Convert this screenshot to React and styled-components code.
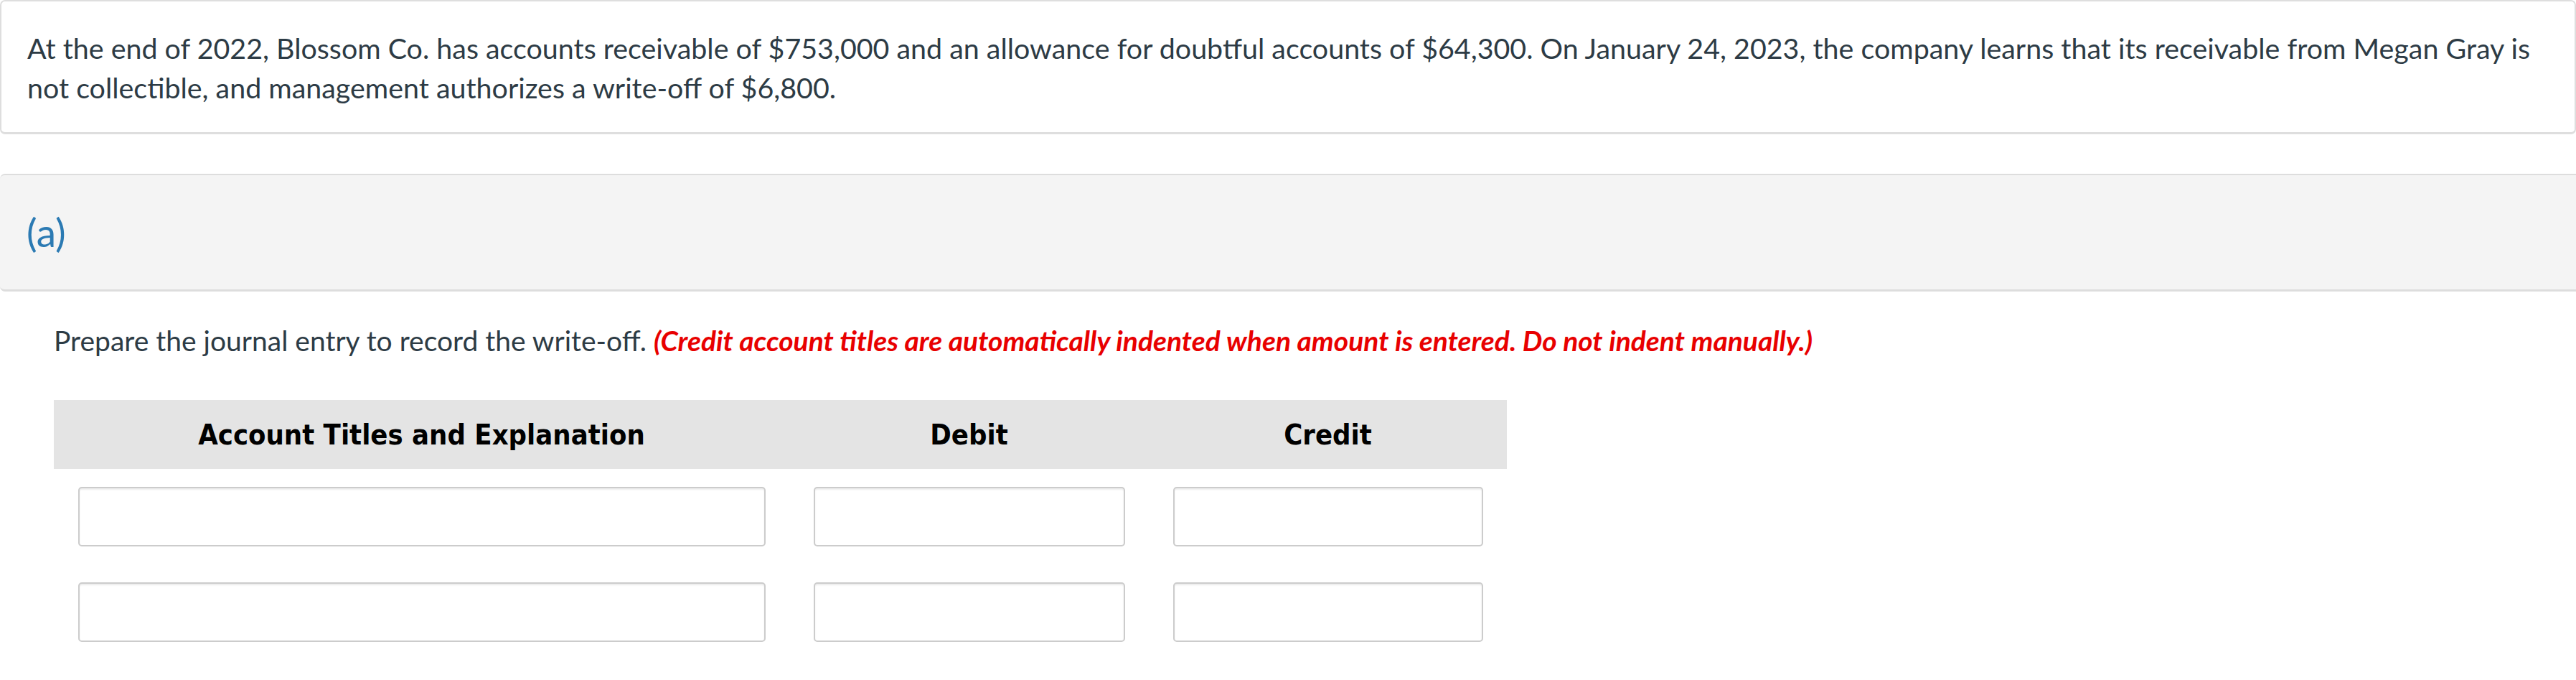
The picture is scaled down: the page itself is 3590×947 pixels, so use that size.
import React from 'react';
import styled, { createGlobalStyle } from 'styled-components';

const Global = createGlobalStyle`
  html, body {
    margin: 0;
    padding: 0;
    background: #fff;
  }
  body {
    font-family: Lato, "Open Sans", sans-serif;
    color: #2d3b45;
  }
`;

const Page = styled.div`
  width: 3590px;
`;

const QuestionCard = styled.div`
  border: 2px solid #dedede;
  border-bottom-width: 3px;
  border-radius: 7px;
  padding: 37px 36px 35px 36px;
  font-size: 39.4px;
  line-height: 55px;
`;

const PartHeader = styled.div`
  margin-top: 55px;
  height: 159px;
  display: flex;
  align-items: center;
  background: #f4f4f4;
  border-top: 2px solid #dddddd;
  border-bottom: 3px solid #dddddd;
  border-radius: 7px 0 0 7px;
  padding-left: 37px;
  color: #2b7ab3;
  font-size: 55px;
  line-height: 1;
`;

const PartBody = styled.div`
  padding: 41px 0 0 75px;
`;

const Instruction = styled.p`
  margin: 0;
  font-size: 39px;
  line-height: 55px;
`;

const Note = styled.span`
  color: #e80000;
  font-style: italic;
  font-weight: 700;
`;

const Journal = styled.div`
  margin-top: 55px;
  width: 2025px;
  display: grid;
  grid-template-columns: 1025px 501px 499px;
`;

const HeadCell = styled.div`
  height: 96px;
  background: #e4e4e4;
  display: flex;
  align-items: center;
  justify-content: center;
  font-family: "DejaVu Sans Condensed", "DejaVu Sans", Verdana, sans-serif;
  font-stretch: condensed;
  font-weight: 700;
  font-size: 39.6px;
  color: #000;
`;

const Cell = styled.div`
  padding: ${({ $first }) => ($first ? '25px' : '50px')} 33px 0 34px;
`;

const Field = styled.input`
  display: block;
  box-sizing: border-box;
  width: 100%;
  height: 83px;
  border: 2px solid #cccccc;
  border-radius: 5px;
  box-shadow: inset 0 2px 2px rgba(0, 0, 0, 0.08);
  background: #fff;
  font-family: Lato, sans-serif;
  font-size: 36px;
  padding: 0 14px;
  outline: none;
`;

const rows = [0, 1];

export default function App() {
  return (
    <Page>
      <Global />
      <QuestionCard>
        At the end of 2022, Blossom Co. has accounts receivable of $753,000 and an allowance for doubtful accounts of $64,300. On January 24, 2023, the company learns that its receivable from Megan Gray is not collectible, and management authorizes a write-off of $6,800.
      </QuestionCard>
      <PartHeader>(a)</PartHeader>
      <PartBody>
        <Instruction>
          Prepare the journal entry to record the write-off.{' '}
          <Note>(Credit account titles are automatically indented when amount is entered. Do not indent manually.)</Note>
        </Instruction>
        <Journal>
          <HeadCell>Account Titles and Explanation</HeadCell>
          <HeadCell>Debit</HeadCell>
          <HeadCell>Credit</HeadCell>
          {rows.map((r) => (
            <React.Fragment key={r}>
              <Cell $first={r === 0}><Field type="text" /></Cell>
              <Cell $first={r === 0}><Field type="text" /></Cell>
              <Cell $first={r === 0}><Field type="text" /></Cell>
            </React.Fragment>
          ))}
        </Journal>
      </PartBody>
    </Page>
  );
}
